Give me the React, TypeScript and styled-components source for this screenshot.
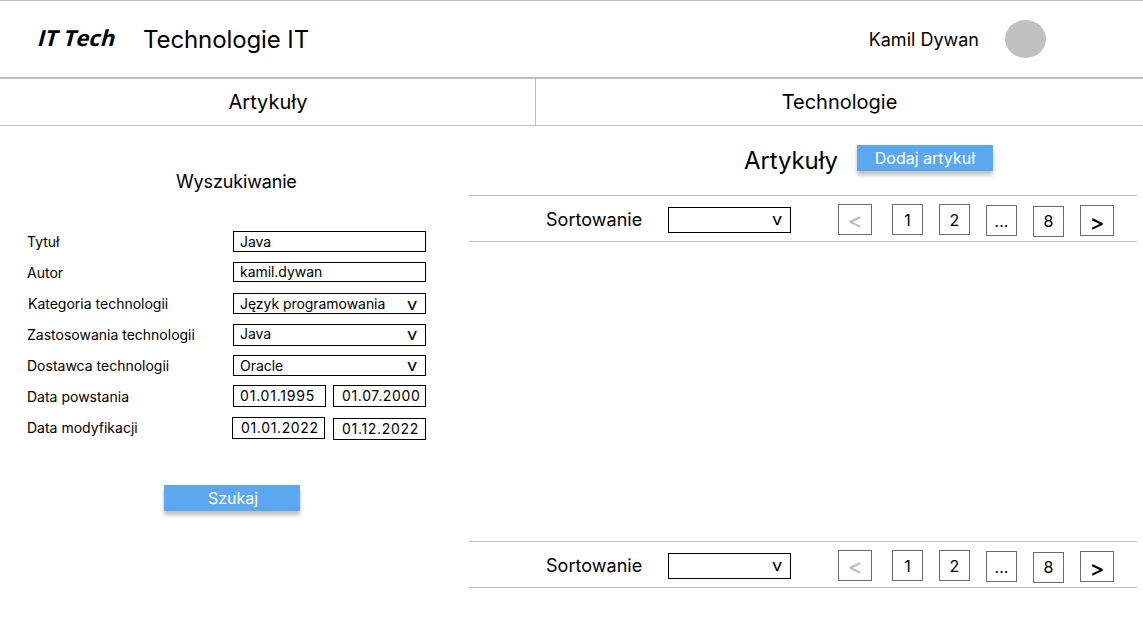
import React from "react";
import styled, { createGlobalStyle } from "styled-components";

const GlobalStyle = createGlobalStyle`
  * { box-sizing: border-box; }
  body {
    margin: 0;
    background: #fff;
    color: #000;
    font-family: Inter, "Liberation Sans", sans-serif;
  }
`;

const line = "#bdbdbd";

const Page = styled.div`
  width: 1143px;
  height: 621px;
  display: flex;
  flex-direction: column;
  overflow: hidden;
`;

const Header = styled.header`
  display: flex;
  height: 79px;
  border-top: 1px solid ${line};
  border-bottom: 2px solid ${line};
`;

const Text = styled.span<{ $size: number; $top?: number; $left?: number; $track?: number }>`
  display: block;
  font-size: ${(p) => p.$size}px;
  line-height: 30px;
  height: 30px;
  margin-top: ${(p) => p.$top ?? 0}px;
  margin-left: ${(p) => p.$left ?? 0}px;
  letter-spacing: ${(p) => p.$track ?? 0}px;
  white-space: nowrap;
`;

const Logo = styled(Text)`
  width: 104px;
  font-family: "Open Sans", "Noto Sans", sans-serif;
  font-weight: 700;
  transform: skewX(-15deg);
`;

const User = styled.div`
  display: flex;
  margin-left: auto;
  padding-right: 97px;
`;

const Avatar = styled.div`
  width: 41px;
  height: 38px;
  margin: 19px 0 0 26px;
  border-radius: 50%;
  background: #c0c0c0;
`;

const Nav = styled.nav`
  display: flex;
  height: 47px;
  border-bottom: 1px solid ${line};
`;

const Tab = styled.div<{ $width: number }>`
  width: ${(p) => p.$width}px;
  display: flex;
  justify-content: center;
  & + & {
    border-left: 1px solid ${line};
  }
`;

const Body = styled.div`
  display: flex;
  flex: 1;
`;

const Search = styled.aside`
  width: 469px;
  display: flex;
  flex-direction: column;
`;

const Form = styled.div`
  margin: 30px 0 0 27px;
`;

const Row = styled.div`
  display: flex;
  height: 31px;
`;

const Label = styled.label<{ $shift?: number }>`
  width: 206px;
  padding-left: ${(p) => p.$shift ?? 0}px;
  font-size: 14px;
  line-height: 29px;
  white-space: nowrap;
`;

const Field = styled.div<{
  $width?: number;
  $height?: number;
  $top?: number;
  $pad?: number;
  $lift?: number;
  $track?: number;
}>`
  display: flex;
  justify-content: space-between;
  width: ${(p) => p.$width ?? 193}px;
  height: ${(p) => p.$height ?? 21}px;
  margin-top: ${(p) => p.$top ?? 4}px;
  padding-left: ${(p) => p.$pad ?? 6}px;
  border: 1px solid #000;
  font-size: 14px;
  line-height: ${(p) => 20 + (p.$lift ?? 0)}px;
  letter-spacing: ${(p) => p.$track ?? -0.05}px;
  white-space: nowrap;
`;

const Dates = styled.div<{ $shift?: number; $gap: number }>`
  display: flex;
  gap: ${(p) => p.$gap}px;
  margin-left: ${(p) => p.$shift ?? 0}px;
`;

const Chevron = styled.span<{ $lineHeight: number }>`
  margin-right: 9px;
  font-size: 15px;
  line-height: ${(p) => p.$lineHeight}px;
  letter-spacing: 0;
  transform: scaleX(1.22);
`;

const Button = styled.button<{ $top: number; $left: number; $indent?: number }>`
  width: 136px;
  height: 26px;
  margin: ${(p) => p.$top}px 0 0 ${(p) => p.$left}px;
  padding: 0 0 0 ${(p) => p.$indent ?? 0}px;
  border: 0;
  background: #5ba7f0;
  box-shadow: 0 4px 4px rgba(0, 0, 0, 0.25);
  color: #fff;
  font-family: inherit;
  font-size: 16px;
  line-height: 26px;
`;

const Main = styled.main`
  width: 668px;
  display: flex;
  flex-direction: column;
`;

const Title = styled.div`
  display: flex;
  height: 69px;
`;

const Bar = styled.div`
  display: flex;
  height: 47px;
  border-top: 1px solid ${line};
  border-bottom: 1px solid ${line};
`;

const Results = styled.div`
  height: 299px;
`;

const SortLabel = styled(Text)`
  width: 122px;
`;

const SortSelect = styled.div`
  display: flex;
  justify-content: flex-end;
  width: 123px;
  height: 26px;
  margin-top: 11px;
  border: 1px solid #000;
`;

const Pager = styled.div`
  display: flex;
  gap: 16px;
  margin-left: 47px;
`;

const PageButton = styled.div<{ $top: number; $lineHeight?: number }>`
  width: 31px;
  height: 31px;
  margin-top: ${(p) => p.$top}px;
  border: 1px solid #6b6b6b;
  font-size: 16px;
  line-height: ${(p) => p.$lineHeight ?? 31}px;
  text-align: center;
`;

const ArrowButton = styled(PageButton)<{ $muted?: boolean }>`
  width: 34px;
  margin-right: ${(p) => (p.$muted ? 4 : 0)}px;
  color: ${(p) => (p.$muted ? "#bdbdbd" : "#000")};
  font-size: 22px;
  font-weight: 500;
`;

function SortBar() {
  return (
    <Bar>
      <SortLabel $size={18} $top={9} $left={77} $track={0.03}>Sortowanie</SortLabel>
      <SortSelect>
        <Chevron $lineHeight={23}>v</Chevron>
      </SortSelect>
      <Pager>
        <ArrowButton $top={8} $lineHeight={31} $muted>&lt;</ArrowButton>
        <PageButton $top={8}>1</PageButton>
        <PageButton $top={8}>2</PageButton>
        <PageButton $top={9}>...</PageButton>
        <PageButton $top={10} $lineHeight={29}>8</PageButton>
        <ArrowButton $top={9} $lineHeight={32}>&gt;</ArrowButton>
      </Pager>
    </Bar>
  );
}

export default function App() {
  return (
    <Page>
      <GlobalStyle />
      <Header>
        <Logo $size={22} $top={21} $left={39}>IT Tech</Logo>
        <Text $size={24} $top={24} $track={-0.1}>Technologie IT</Text>
        <User>
          <Text $size={18} $top={24}>Kamil Dywan</Text>
          <Avatar />
        </User>
      </Header>
      <Nav>
        <Tab $width={535}><Text $size={20} $top={8} $left={1}>Artykuły</Text></Tab>
        <Tab $width={608}><Text $size={20} $top={8}>Technologie</Text></Tab>
      </Nav>
      <Body>
        <Search>
          <Text $size={18} $top={41} $left={176} $track={-0.15}>Wyszukiwanie</Text>
          <Form>
            <Row><Label>Tytuł</Label><Field>Java</Field></Row>
            <Row><Label>Autor</Label><Field $height={20} $lift={-2}>kamil.dywan</Field></Row>
            <Row>
              <Label $shift={1}>Kategoria technologii</Label>
              <Field>Język programowania<Chevron $lineHeight={22}>v</Chevron></Field>
            </Row>
            <Row>
              <Label>Zastosowania technologii</Label>
              <Field $height={22} $lift={-2}>Java<Chevron $lineHeight={20}>v</Chevron></Field>
            </Row>
            <Row>
              <Label>Dostawca technologii</Label>
              <Field>Oracle<Chevron $lineHeight={20}>v</Chevron></Field>
            </Row>
            <Row>
              <Label>Data powstania</Label>
              <Dates $gap={7}>
                <Field $width={93} $height={22} $top={3} $track={0.8}>01.01.1995</Field>
                <Field $width={93} $height={22} $top={3} $pad={8} $track={0.65}>01.07.2000</Field>
              </Dates>
            </Row>
            <Row>
              <Label>Data modyfikacji</Label>
              <Dates $gap={8} $shift={-1}>
                <Field $width={93} $height={22} $pad={8} $track={0.65}>01.01.2022</Field>
                <Field $width={93} $height={22} $top={5} $pad={8} $track={0.7}>01.12.2022</Field>
              </Dates>
            </Row>
          </Form>
          <Button $top={41} $left={164} $indent={2}>Szukaj</Button>
        </Search>
        <Main>
          <Title>
            <Text $size={24} $top={20} $left={275} $track={-0.1}>Artykuły</Text>
            <Button $top={19} $left={19}>Dodaj artykuł</Button>
          </Title>
          <SortBar />
          <Results />
          <SortBar />
        </Main>
      </Body>
    </Page>
  );
}
